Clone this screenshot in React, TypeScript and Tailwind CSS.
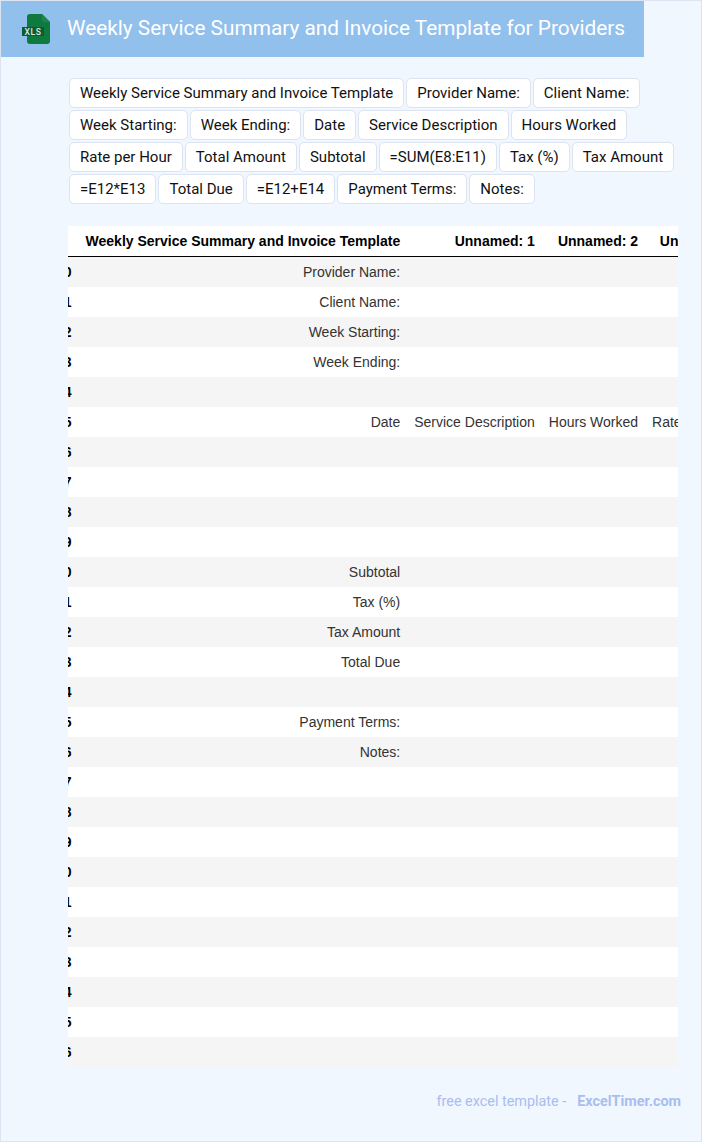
import React from "react";

const TAGS = [
  "Weekly Service Summary and Invoice Template",
  "Provider Name:",
  "Client Name:",
  "Week Starting:",
  "Week Ending:",
  "Date",
  "Service Description",
  "Hours Worked",
  "Rate per Hour",
  "Total Amount",
  "Subtotal",
  "=SUM(E8:E11)",
  "Tax (%)",
  "Tax Amount",
  "=E12*E13",
  "Total Due",
  "=E12+E14",
  "Payment Terms:",
  "Notes:",
];

const LABELS: Record<number, string> = {
  0: "Provider Name:",
  1: "Client Name:",
  2: "Week Starting:",
  3: "Week Ending:",
  5: "Date",
  10: "Subtotal",
  11: "Tax (%)",
  12: "Tax Amount",
  13: "Total Due",
  15: "Payment Terms:",
  16: "Notes:",
};

const ROWS = Array.from({ length: 27 }, (_, i) => i);

const XlsIcon = () => (
  <svg width="28" height="32" viewBox="0 0 28 32" className="shrink-0">
    <path d="M8 1h12l8 8v19a3 3 0 0 1-3 3H8a3 3 0 0 1-3-3V4a3 3 0 0 1 3-3z" fill="#0f7a40" />
    <path d="M20 1l8 8h-5a3 3 0 0 1-3-3z" fill="#1f8550" />
    <rect x="0" y="14" width="22" height="9" fill="#0c5c33" />
    <text x="11" y="21.5" textAnchor="middle" fontSize="8.5" letterSpacing="0.6" fontWeight="500" fill="#dcebe2" fontFamily="Roboto, sans-serif">
      XLS
    </text>
  </svg>
);

export default function App() {
  return (
    <div className="w-[702px] h-[1142px] bg-[#f0f7ff] border border-[#dbe4f0] font-['Roboto',sans-serif] overflow-hidden">
      <header className="w-[643px] h-[56px] bg-[#92c0ec] flex items-center pl-[21px] gap-[17px]">
        <XlsIcon />
        <h1 className="text-[20.8px] font-normal text-white whitespace-nowrap -mt-[1px]">
          Weekly Service Summary and Invoice Template for Providers
        </h1>
      </header>

      <div className="ml-[68px] mr-[24px] mt-[21px] flex flex-wrap gap-x-[2px] gap-y-[2px]">
        {TAGS.map((tag) => (
          <span
            key={tag}
            className="h-[30px] px-[10px] flex items-center bg-white border border-[#dbe4f0] rounded-[5px] text-[15px] text-[#111] whitespace-nowrap"
          >
            {tag}
          </span>
        ))}
      </div>

      <div className="ml-[67px] w-[610px] mt-[22px] overflow-hidden">
        <table className="-ml-[19px] border-separate border-spacing-0 font-['Liberation_Sans',Arial,sans-serif] text-[14px] text-[#333]">
          <thead>
            <tr className="bg-white h-[31px] text-black">
              <th className="w-[22px] px-[7px] border-b border-black"></th>
              <th className="px-[7px] text-right font-bold whitespace-nowrap w-[335px] border-b border-black">Weekly Service Summary and Invoice Template</th>
              <th className="px-[7px] text-right font-bold whitespace-nowrap border-b border-black">Unnamed: 1</th>
              <th className="px-[7px] text-right font-bold whitespace-nowrap border-b border-black">Unnamed: 2</th>
              <th className="px-[7px] text-right font-bold whitespace-nowrap border-b border-black">Unnamed: 3</th>
              <th className="px-[7px] text-right font-bold whitespace-nowrap border-b border-black">Unnamed: 4</th>
            </tr>
          </thead>
          <tbody>
            {ROWS.map((i) => (
              <tr key={i} className={i % 2 === 0 ? "bg-[#f5f5f5] h-[30px]" : "bg-white h-[30px]"}>
                <th className="px-[7px] text-right font-bold text-black whitespace-nowrap">{i}</th>
                <td className="px-[7px] text-right whitespace-nowrap">{LABELS[i] ?? ""}</td>
                <td className="px-[7px] text-right whitespace-nowrap">{i === 5 ? "Service Description" : ""}</td>
                <td className="px-[7px] text-right whitespace-nowrap">{i === 5 ? "Hours Worked" : ""}</td>
                <td className="px-[7px] text-right whitespace-nowrap">{i === 5 ? "Rate per Hour" : ""}</td>
                <td className="px-[7px] text-right whitespace-nowrap">{i === 5 ? "Total Amount" : ""}</td>
              </tr>
            ))}
          </tbody>
        </table>
      </div>

      <footer className="mt-[24px] w-[680px] flex justify-end text-[14.4px] text-[#aabdf0]">
        <span>free excel template -</span>
        <span className="ml-[11px] font-bold">ExcelTimer.com</span>
      </footer>
    </div>
  );
}
